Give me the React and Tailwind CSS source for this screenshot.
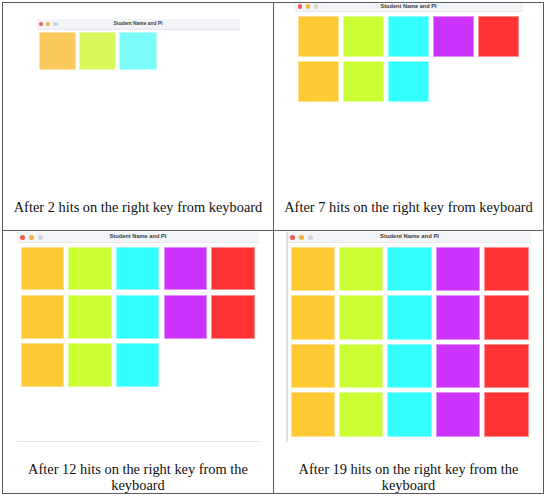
const COLORS = ['bg-[#ffc933]', 'bg-[#ccff33]', 'bg-[#33ffff]', 'bg-[#cc33ff]', 'bg-[#ff3333]']
const FADED = ['bg-[#fbc85c]', 'bg-[#d8f85c]', 'bg-[#7afdfb]']

function TitleBar({ bar, lights, dot, text }) {
  return (
    <div className={`relative flex items-center justify-center bg-[#f3f4f7] border-b border-[#e8e8ec] ${bar}`}>
      <div className={`absolute left-0 top-0 bottom-0 flex items-center ${lights}`}>
        <span className={`rounded-full bg-[#ee5a54] ${dot}`} />
        <span className={`rounded-full bg-[#f4b23f] ${dot}`} />
        <span className={`rounded-full bg-[#d3d3d6] ${dot}`} />
      </div>
      <span className={`font-['Liberation_Sans',sans-serif] font-bold text-[#3c3c3c] leading-none whitespace-nowrap ${text}`}>
        Student Name and PI
      </span>
    </div>
  )
}

function Tiles({ count, colors, grid, tile }) {
  return (
    <div className={`grid ${grid}`}>
      {Array.from({ length: count }).map((_, i) => (
        <div key={i} className={`border border-white/45 ${colors[i % colors.length]} ${tile}`} />
      ))}
    </div>
  )
}

function Caption({ children, className }) {
  return (
    <p className={`font-['Liberation_Serif',serif] text-[14.4px] leading-[16px] text-[#111] text-center px-1 ${className}`}>
      {children}
    </p>
  )
}

export default function App() {
  return (
    <div className="w-[547px] h-[496px] bg-white overflow-hidden">
      <div className="m-[2px] w-[542px] grid grid-cols-[271px_269px] grid-rows-[228px_262px] border border-[#5c5c5c]">
        {/* after 2 hits */}
        <div className="flex flex-col justify-between border-r border-b border-[#5c5c5c] pt-[16px]">
          <div className="mx-auto w-[203px]">
            <TitleBar bar="h-[11px]" lights="pl-[2.3px] gap-[3px]" dot="w-[4.3px] h-[4.3px]" text="text-[4.9px]" />
            <Tiles
              count={3}
              colors={FADED}
              grid="grid-cols-[repeat(5,37.3px)] gap-[3px] px-[2.3px] pt-[2.3px]"
              tile="h-[37.3px]"
            />
          </div>
          <Caption className="pb-[15px]">After 2 hits on the right key from keyboard</Caption>
        </div>

        {/* after 7 hits */}
        <div className="flex flex-col justify-between border-b border-[#5c5c5c]">
          <div className="mx-auto w-[228px]">
            <TitleBar bar="h-[9.3px] pb-[1.5px]" lights="pl-[3px] pb-[1.5px] gap-[3.5px]" dot="w-[4.6px] h-[4.6px]" text="text-[5.6px]" />
            <Tiles
              count={8}
              colors={COLORS}
              grid="grid-cols-[repeat(5,41.3px)] gap-[3.7px] px-[3.7px] pt-[3.4px]"
              tile="h-[41.3px]"
            />
          </div>
          <Caption className="pb-[15px]">After 7 hits on the right key from keyboard</Caption>
        </div>

        {/* after 12 hits */}
        <div className="flex flex-col justify-between border-r border-[#5c5c5c] pt-[1.3px]">
          <div className="mx-auto w-[242.3px] h-[209.7px] border-b border-[#e2e2e2]">
            <TitleBar bar="h-[11px]" lights="pl-[3.5px] gap-[3.7px]" dot="w-[5px] h-[5px]" text="text-[5.7px]" />
            <Tiles
              count={13}
              colors={COLORS}
              grid="grid-cols-[repeat(5,43.3px)] gap-x-[4.35px] gap-y-[4.5px] px-[4px] pt-[3.4px]"
              tile="h-[43.8px]"
            />
          </div>
          <Caption>After 12 hits on the right key from the keyboard</Caption>
        </div>

        {/* after 19 hits */}
        <div className="flex flex-col justify-between pt-[1.3px]">
          <div className="mx-auto w-[245.7px] h-[210px] border-l-2 border-[#e0e0e0]">
            <TitleBar bar="h-[11px]" lights="pl-[2.2px] gap-[3.85px]" dot="w-[5px] h-[5px]" text="text-[5.9px]" />
            <Tiles
              count={20}
              colors={COLORS}
              grid="grid-cols-[repeat(5,44.4px)] gap-x-[4px] gap-y-[4.1px] pl-[3px] pt-[3.4px]"
              tile="h-[44.4px]"
            />
          </div>
          <Caption>After 19 hits on the right key from the keyboard</Caption>
        </div>
      </div>
    </div>
  )
}
